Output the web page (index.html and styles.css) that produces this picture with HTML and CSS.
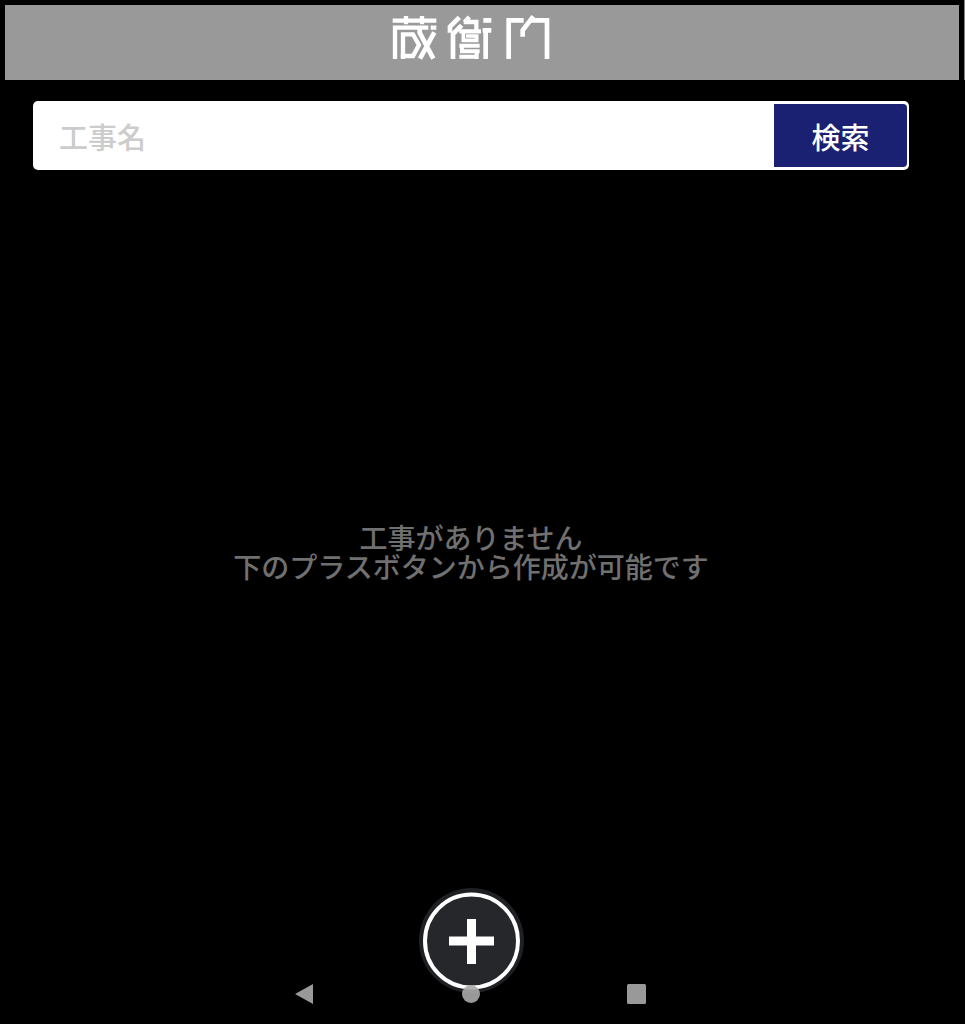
FILE: index.html
```html
<!DOCTYPE html>
<html lang="ja">
<head>
    <meta charset="UTF-8">
    <meta name="viewport" content="width=device-width, initial-scale=1.0">
    <title>蔵衛門</title>
    <link rel="stylesheet" href="styles.css">
</head>
<body>
    <div class="topbar">
        <header class="header">
            <svg class="logo" viewBox="36 42 474 138" role="img" aria-label="蔵衛門">
                <g fill="none" stroke="#fff" stroke-width="13">
                    <path d="M38 62H169M78 48V73M126 48V73"/>
                    <path d="M45 177V83H145M152 83H169"/>
                    <path d="M69 177V103H99L117 135L99 168H62"/>
                    <path d="M119 84V98L160 176M163 97L120 176" stroke-width="14"/>
                    <path d="M238 52L210 80V98M245 76L219 102V177" stroke-width="14"/>
                    <path d="M253 67L268 51M251 66H289V94M238 94H303" stroke-width="13"/>
                    <path d="M250 94V121H290V108H258" stroke-width="11"/>
                    <path d="M238 137H299M246 137V154H299M290 154V177M238 170H290" stroke-width="12"/>
                    <path d="M310 61H334M308 91H334M317 91V177" stroke-width="14"/>
                    <path d="M386 177V61H431M428 110V91L460 49M450 61H501V177" stroke-width="14"/>
                </g>
            </svg>
        </header>
        <div class="edge"></div>
    </div>

    <main class="main">
        <form class="search">
            <input type="text" class="search-input" placeholder="工事名" aria-label="工事名">
            <button type="submit" class="search-button">検索</button>
        </form>
        <p class="empty">工事がありません<br>下のプラスボタンから作成が可能です</p>
        <button type="button" class="add-button" aria-label="工事を作成">
            <svg viewBox="0 0 105 105">
                <circle cx="52.5" cy="52.5" r="52.5" fill="#1f2024"/>
                <circle cx="52.5" cy="53" r="46.5" fill="#26272b" stroke="#fff" stroke-width="4"/>
                <path d="M30 53H75M52.5 31V76" stroke="#fff" stroke-width="9"/>
            </svg>
        </button>
        <nav class="navbar">
            <button type="button" class="nav-button" aria-label="戻る">
                <svg viewBox="0 0 20 20"><path d="M0 10L18 0V20Z" fill="#999"/></svg>
            </button>
            <button type="button" class="nav-button" aria-label="ホーム">
                <svg viewBox="0 0 20 20"><circle cx="10" cy="10" r="9" fill="#aaa" fill-opacity="0.9"/></svg>
            </button>
            <button type="button" class="nav-button" aria-label="アプリ一覧">
                <svg viewBox="0 0 20 20"><rect width="19" height="20" rx="1.5" fill="#999"/></svg>
            </button>
        </nav>
    </main>
</body>
</html>
```
FILE: styles.css
```css
* {
    box-sizing: border-box;
}
body {
    display: flex;
    flex-direction: column;
    min-height: 100vh;
    margin: 0;
    background-color: #000;
    font-family: "Noto Sans CJK JP", sans-serif;
}
button {
    padding: 0;
    border: none;
    background: none;
    cursor: pointer;
}
svg {
    display: block;
    width: 100%;
}
.topbar {
    display: flex;
    gap: 5px;
}
.header {
    flex: 1;
    margin: 5px 0 0 5px;
    padding: 9px 22px 20px 0;
    background-color: #999;
}
.logo {
    width: 158px;
    height: 46px;
    margin: 0 auto;
}
.edge {
    width: 1px;
    background-color: #888;
}
.main {
    flex: 1;
    display: flex;
    flex-direction: column;
    align-items: center;
    padding: 21px 56px 20px 33px;
}
.search {
    display: flex;
    width: 100%;
    height: 69px;
    padding: 3px 2px 3px 0;
    border-radius: 5px;
    background-color: #fff;
}
.search-input {
    flex: 1;
    min-width: 0;
    padding: 0 26px;
    border: none;
    background: none;
    color: #333;
    font: 500 29px "Noto Sans CJK JP", sans-serif;
}
.search-input::placeholder {
    color: #ccc;
    opacity: 1;
}
.search-button {
    width: 133px;
    border-radius: 0 4px 4px 0;
    background-color: #1a2172;
    color: #fff;
    font: 500 29px "Noto Sans CJK JP", sans-serif;
}
.empty {
    flex: 1;
    display: flex;
    flex-direction: column;
    justify-content: center;
    margin: 0;
    padding-top: 46px;
    color: #707070;
    font-size: 28px;
    font-weight: 500;
    line-height: 29px;
    text-align: center;
}
.add-button {
    width: 105px;
    height: 105px;
    border-radius: 50%;
}
.navbar {
    position: relative;
    display: flex;
    justify-content: center;
    gap: 146px;
    margin-top: -9px;
}
.nav-button {
    width: 20px;
    height: 20px;
}
```
